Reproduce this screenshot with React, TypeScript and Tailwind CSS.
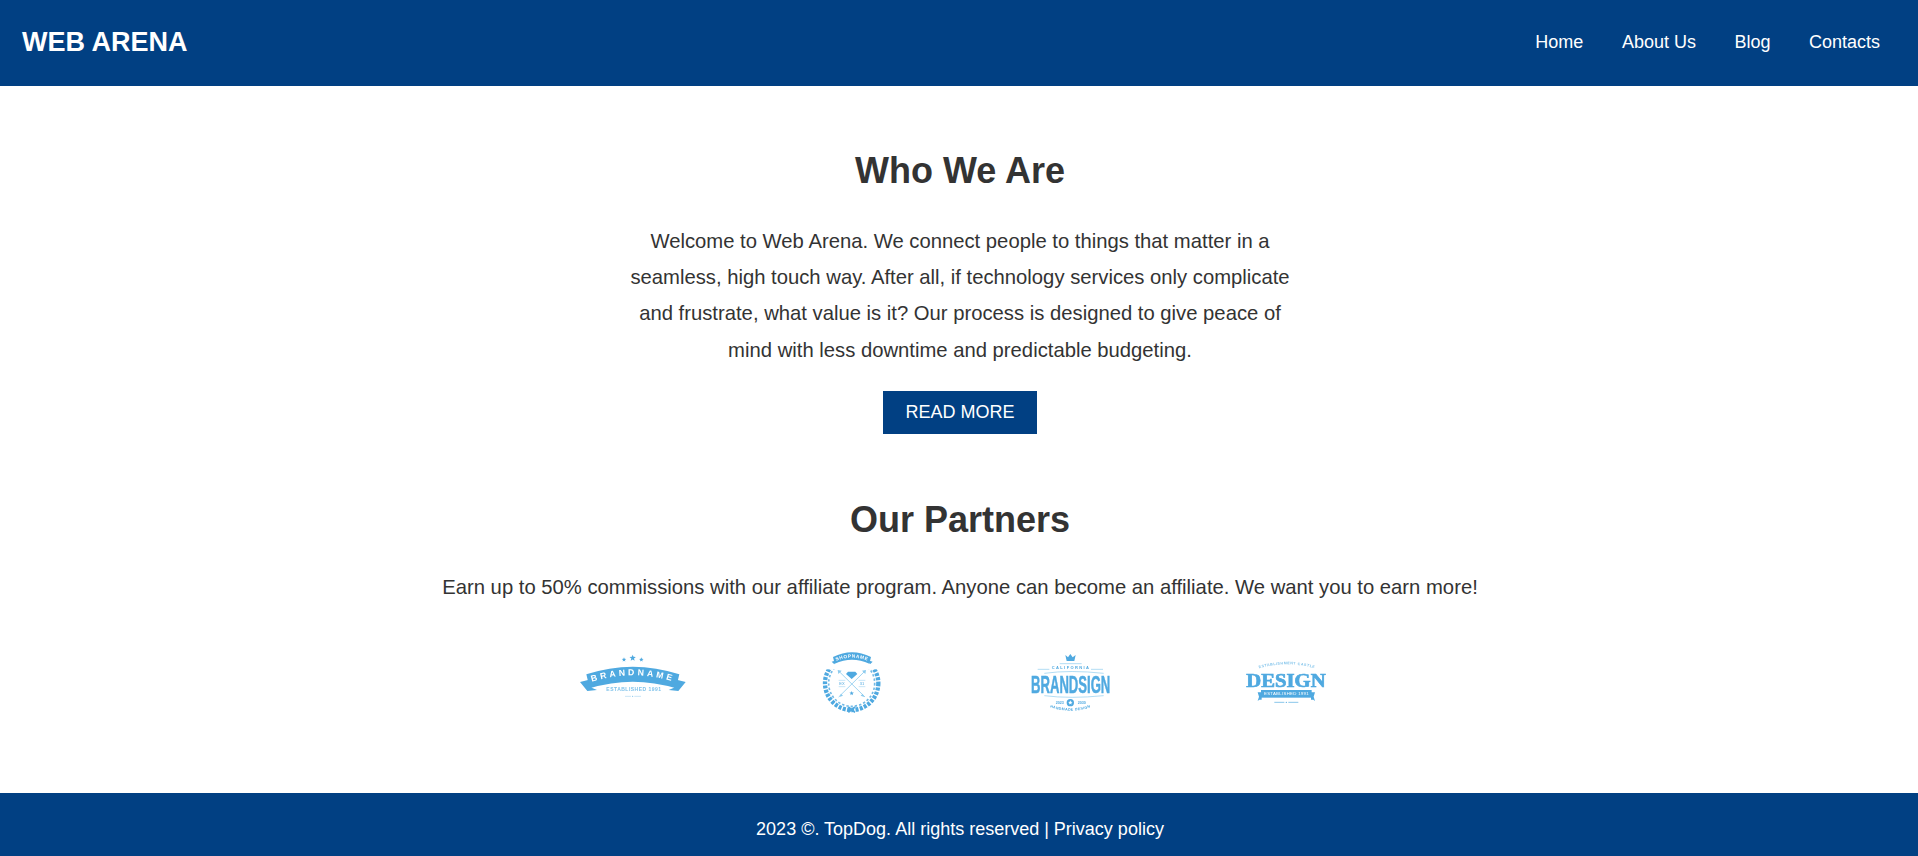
const blue = "#4fa9e0";
const svgClass = "h-[80px] w-[120px] overflow-visible blur-[0.35px]";
const star = (x: number, y: number, r: number) => {
  const pts: string[] = [];
  for (let i = 0; i < 10; i++) {
    const a = -Math.PI / 2 + (i * Math.PI) / 5;
    const q = i % 2 ? r * 0.42 : r;
    pts.push(`${(x + q * Math.cos(a)).toFixed(1)},${(y + q * Math.sin(a)).toFixed(1)}`);
  }
  return pts.join(" ");
};
function Logo1() {
  return (
    <svg className={svgClass} viewBox="36 39 360 240" fontFamily="'Liberation Sans', sans-serif">
      <polygon points={star(189, 86, 7)} fill={blue} />
      <polygon points={star(215, 81, 10)} fill={blue} />
      <polygon points={star(241, 86, 7)} fill={blue} />
      <path d="M57 153 L84 146 L92 170 L108 177 L79 180 Z" fill={blue} />
      <path d="M374 153 L347 146 L339 170 L323 177 L352 180 Z" fill={blue} />
      <path d="M76 130 Q215 84 355 130 L345 172 Q215 132 86 172 Z" fill={blue} />
      <path id="l1arc" d="M90 153 Q215 113 342 153" fill="none" />
      <text fontSize="26" fontWeight="700" fill="#fff">
        <textPath href="#l1arc" startOffset="50%" textAnchor="middle" letterSpacing="9">BRANDNAME</textPath>
      </text>
      <text x="218" y="179" textAnchor="middle" fontSize="15" fontWeight="700" fill="#7fc2ea" textLength="164" lengthAdjust="spacing">ESTABLISHED 1991</text>
      <path d="M192 196h18M220 196h20" stroke={blue} strokeWidth="1.500" opacity="0.6" />
      <circle cx="215" cy="196" r="1.500" fill={blue} />
    </svg>
  );
}
function Logo2() {
  return (
    <svg className={svgClass} viewBox="0 39 360 240" fill="none" fontFamily="'Liberation Sans', sans-serif">
      <circle cx="182" cy="157" r="80" stroke={blue} strokeWidth="13" strokeDasharray="9 4" />
      <circle cx="182" cy="157" r="69" stroke={blue} strokeWidth="5" strokeDasharray="7 6" opacity="0.8" />
      <rect x="100" y="60" width="165" height="55" fill="#fff" />
      <path d="M122 92 L130 100 L136 88 Z M245 92 L237 100 L231 88 Z" fill={blue} />
      <path d="M126 78 Q183 50 240 78 L235 98 Q183 74 131 98 Z" fill={blue} />
      <path id="l2arc" d="M133 91 Q183 68 233 91" />
      <text fontSize="14" fontWeight="700" fill="#fff">
        <textPath href="#l2arc" startOffset="50%" textAnchor="middle" letterSpacing="2">SHOPNAME</textPath>
      </text>
      <path d="M143 120 L222 198 M222 120 L143 198" stroke="#8ccbee" strokeWidth="2.500" />
      <path d="M140 117l12 2-10 10zM225 117l-12 2 10 10zM145 198l5-10 6 6zM220 198l-5-10-6 6z" fill="#8ccbee" />
      <path d="M171 122h22l6 7-17 15-17-15z" fill={blue} />
      <polygon points={star(182, 187, 7)} fill={blue} />
      <path d="M143 148h20M143 167h20M203 148h20M203 167h20" stroke="#8ccbee" strokeWidth="1.500" />
      <text x="153" y="162" textAnchor="middle" fontSize="12" fill={blue}>EX</text>
      <text x="213" y="162" textAnchor="middle" fontSize="12" fill={blue}>31</text>
      <path d="M172 228l20 16M192 228l-20 16" stroke={blue} strokeWidth="5" />
    </svg>
  );
}
function Logo3() {
  return (
    <svg className={svgClass} viewBox="-6 9 360 240" fill="none" fontFamily="'Liberation Sans', sans-serif">
      <path d="M163 42 L171 49 L178 39 L185 49 L194 42 L190 60 H167 Z" fill={blue} />
      <path d="M146 68h66" stroke="#8ccbee" strokeWidth="2" />
      <text x="178" y="84" textAnchor="middle" fontSize="12" fontWeight="700" fill={blue} textLength="112" lengthAdjust="spacing">CALIFORNIA</text>
      <path d="M80 85h35M240 85h36M100 97 Q178 86 278 97" stroke="#8ccbee" strokeWidth="2" />
      <text x="179" y="156" textAnchor="middle" fontSize="72" fontWeight="700" fill={blue} stroke={blue} strokeWidth="1.500" textLength="238" lengthAdjust="spacingAndGlyphs">BRANDSIGN</text>
      <path d="M100 164 Q178 174 278 164" stroke="#8ccbee" strokeWidth="2" />
      <circle cx="178" cy="185" r="11" fill={blue} />
      <polygon points={star(178, 185, 7)} fill="#fff" />
      <text x="134" y="190" fontSize="11" fontWeight="700" fill={blue}>2023</text>
      <text x="200" y="190" fontSize="11" fontWeight="700" fill={blue}>2030</text>
      <path id="l3arc" d="M100 192 Q178 226 256 192" />
      <text fontSize="11" fontWeight="700" fill={blue}>
        <textPath href="#l3arc" startOffset="50%" textAnchor="middle" letterSpacing="1">HANDMADE DESIGN</textPath>
      </text>
    </svg>
  );
}
function Logo4() {
  return (
    <svg className={svgClass} viewBox="-12 -21 360 240" fill="none" fontFamily="'Liberation Serif', serif">
      <path id="l4arc" d="M78 54 Q166 26 258 54" />
      <text fontSize="11" fontWeight="700" fill="#7fc2ea" fontFamily="'Liberation Sans', sans-serif">
        <textPath href="#l4arc" startOffset="50%" textAnchor="middle" letterSpacing="1.500">ESTABLISHMENT CASTLE</textPath>
      </text>
      <text x="165" y="107" textAnchor="middle" fontSize="54" fontWeight="700" fill={blue} stroke={blue} strokeWidth="2" textLength="238" lengthAdjust="spacingAndGlyphs">DESIGN</text>
      <path d="M80 124 H92 V146 H85 L80 150 L84 137 Z M252 124 H240 V146 H247 L252 150 L248 137 Z" fill={blue} />
      <rect x="90" y="117" width="152" height="23" fill={blue} />
      <text x="166" y="133" textAnchor="middle" fontSize="13" fill="#fff" fontFamily="'Liberation Sans', sans-serif" textLength="134" lengthAdjust="spacing">ESTABLISHED 1991</text>
      <path d="M130 154h30M172 154h30" stroke={blue} strokeWidth="2" />
      <circle cx="166" cy="154" r="2" fill={blue} />
    </svg>
  );
}
export default function App() {
  return (
    <div className="flex min-h-[856px] flex-col bg-white font-['Liberation_Sans',Arial,sans-serif] text-[#333]">
      <header className="flex h-[86px] shrink-0 items-center justify-between bg-[#014083] pb-[2px] pl-[22px] pr-[38px] text-white">
        <div className="text-[27px] font-bold leading-none">WEB ARENA</div>
        <nav className="flex gap-[38.5px] text-[18px] leading-none">
          <span>Home</span><span>About Us</span><span>Blog</span><span>Contacts</span>
        </nav>
      </header>
      <main className="flex flex-1 flex-col items-center pl-[2px] pt-[64px] text-center">
        <h1 className="text-[36px] font-bold leading-[41px]">Who We Are</h1>
        <p className="mt-[32px] w-[680px] text-[20.25px] leading-[36.2px]">Welcome to Web Arena. We connect people to things that matter in a seamless, high touch way. After all, if technology services only complicate and frustrate, what value is it? Our process is designed to give peace of mind with less downtime and predictable budgeting.</p>
        <div className="mt-[23px] flex h-[43px] w-[154px] items-center justify-center bg-[#014083] text-[18px] text-white">READ MORE</div>
        <h2 className="mt-[65px] text-[36px] font-bold leading-[41px]">Our Partners</h2>
        <p className="mt-[31px] text-[20.25px] leading-[32px]">Earn up to 50% commissions with our affiliate program. Anyone can become an affiliate. We want you to earn more!</p>
        <div className="mt-[41px] grid w-[872px] grid-cols-4 justify-items-center">
          <Logo1 /><Logo2 /><Logo3 /><Logo4 />
        </div>
      </main>
      <footer className="flex h-[63px] shrink-0 items-center justify-center bg-[#014083] pl-[2px] pt-[9px] text-[18px] text-white">2023 ©. TopDog. All rights reserved | Privacy policy</footer>
    </div>
  );
}
